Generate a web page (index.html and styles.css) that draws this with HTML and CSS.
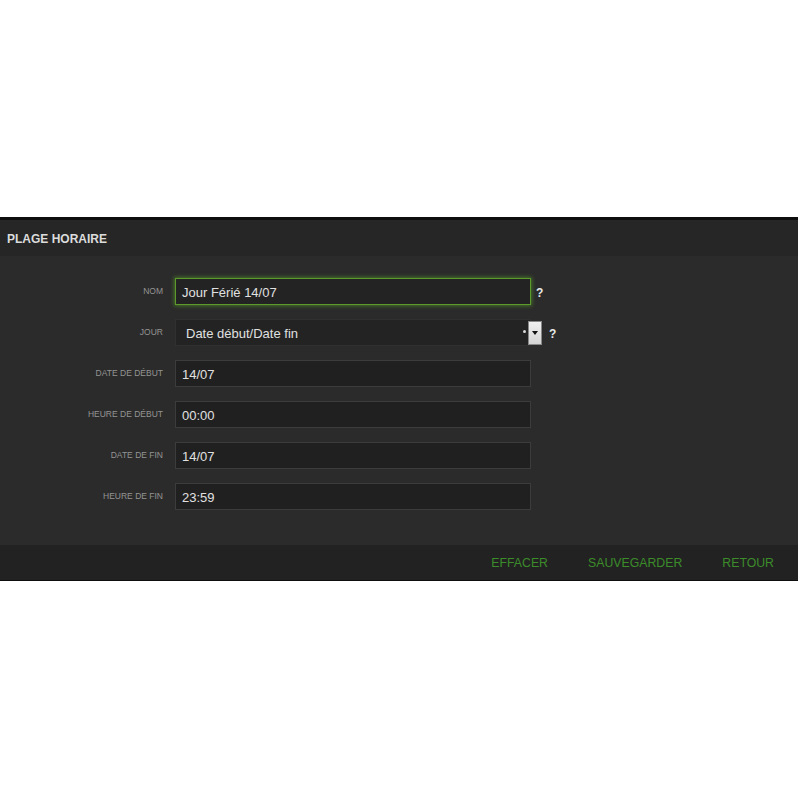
FILE: index.html
```html
<!DOCTYPE html>
<html lang="fr">
<head>
<meta charset="utf-8">
<title>Plage horaire</title>
<link rel="stylesheet" href="styles.css">
</head>
<body>
<div class="spacer"></div>
<div class="panel">
  <div class="panel-head">PLAGE HORAIRE</div>
  <div class="panel-body">
    <div class="row">
      <label class="lbl">NOM</label>
      <div class="field focus">Jour Férié 14/07</div>
      <span class="help">?</span>
    </div>
    <div class="row">
      <label class="lbl">JOUR</label>
      <div class="field select">Date début/Date fin
        <span class="tick"></span>
        <span class="drop"><span class="tri"></span></span>
      </div>
      <span class="help help-sel">?</span>
    </div>
    <div class="row">
      <label class="lbl">DATE DE DÉBUT</label>
      <div class="field">14/07</div>
    </div>
    <div class="row">
      <label class="lbl">HEURE DE DÉBUT</label>
      <div class="field">00:00</div>
    </div>
    <div class="row">
      <label class="lbl">DATE DE FIN</label>
      <div class="field">14/07</div>
    </div>
    <div class="row">
      <label class="lbl">HEURE DE FIN</label>
      <div class="field">23:59</div>
    </div>
  </div>
  <div class="panel-foot">
    <span class="btn">EFFACER</span>
    <span class="btn">SAUVEGARDER</span>
    <span class="btn">RETOUR</span>
  </div>
</div>
</body>
</html>
```
FILE: styles.css
```css
html, body {
  margin: 0;
  padding: 0;
  background: #ffffff;
  font-family: "Liberation Sans", Arial, sans-serif;
}
.spacer {
  height: 217px;
}
.panel {
  width: 798px;
  border-top: 3px solid #0e0e0e;
  border-bottom: 1px solid #0e0e0e;
  background: #2b2b2b;
}
.panel-head {
  height: 36px;
  background: #262626;
  color: #dcdcdc;
  font-weight: bold;
  font-size: 12px;
  line-height: 38px;
  padding-left: 7px;
}
.panel-body {
  padding: 22px 0 35px 0;
  display: flex;
  flex-direction: column;
  gap: 14px;
  background: #2b2b2b;
}
.row {
  display: flex;
  align-items: center;
  height: 27px;
}
.lbl {
  width: 163px;
  text-align: right;
  font-size: 8.5px;
  color: #949494;
  margin-right: 12px;
  position: relative;
  top: -1px;
}
.field {
  box-sizing: border-box;
  width: 356px;
  height: 27px;
  background: #202020;
  border: 1px solid #3c3c3c;
  color: #e0e0e0;
  font-size: 13px;
  line-height: 27px;
  padding-left: 6px;
  position: relative;
}
.field.focus {
  border: 1px solid #5c9a2c;
  box-shadow: 0 0 4px 1px rgba(92, 170, 40, 0.55);
  background: #232323;
}
.field.select {
  padding-left: 10px;
  background: #232323;
  border-color: #303030;
}
.tick {
  position: absolute;
  right: 4px;
  top: 10px;
  width: 3px;
  height: 3px;
  border-radius: 50%;
  background: #d8d8d8;
}
.drop {
  position: absolute;
  right: -12px;
  top: 1px;
  width: 14px;
  height: 24px;
  background: linear-gradient(#f0f0f0, #d4d4d4);
  border: 1px solid #888;
  box-sizing: border-box;
  display: flex;
  align-items: center;
  justify-content: center;
}
.tri {
  width: 0;
  height: 0;
  border-left: 3.5px solid transparent;
  border-right: 3.5px solid transparent;
  border-top: 4px solid #111;
}
.help {
  color: #e8e8e8;
  font-weight: bold;
  font-size: 12px;
  margin-left: 5px;
  position: relative;
  top: 1px;
}
.help-sel {
  margin-left: 18px;
}
.panel-foot {
  height: 35px;
  background: #222222;
  display: flex;
  justify-content: flex-end;
  align-items: center;
  padding-right: 24px;
  gap: 40px;
}
.btn {
  color: #3c8c2a;
  font-size: 12.3px;
}
```
